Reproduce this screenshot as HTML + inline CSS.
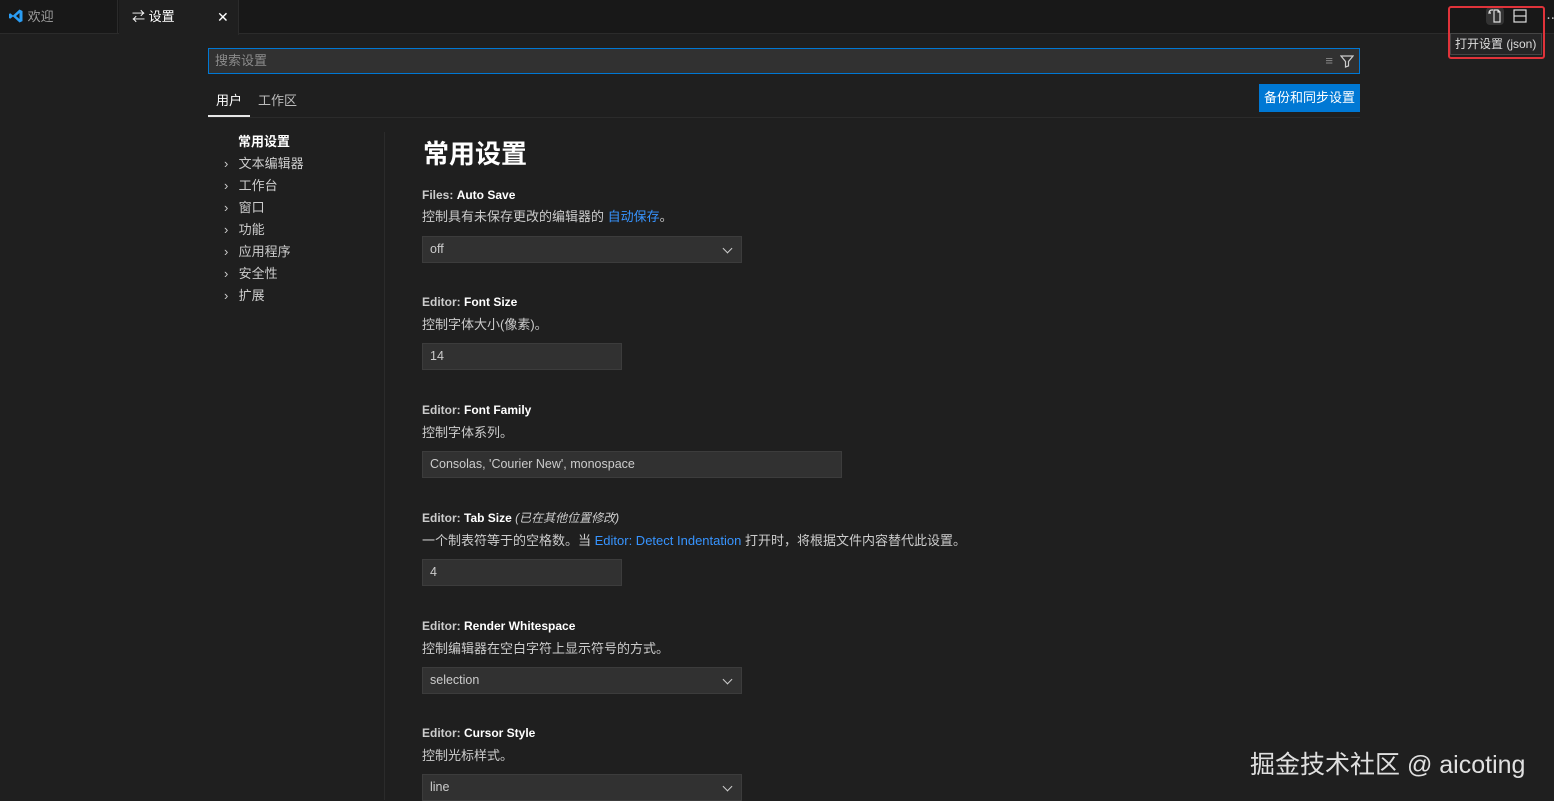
<!DOCTYPE html>
<html><head><meta charset="utf-8"><style>
*{margin:0;padding:0;box-sizing:border-box}
body{width:1554px;height:800px;background:#1f1f1f;font-family:"Liberation Sans","Noto Sans CJK SC",sans-serif;color:#ccc;font-size:13px;position:relative;overflow:hidden}
.abs{position:absolute}
.tabbar{left:0;top:0;width:1554px;height:34px;background:#181818;border-bottom:1px solid #2b2b2b}
.tab{top:0;height:34px;line-height:34px;font-size:13px}
.search{left:208px;top:48px;width:1152px;height:26px;border:1px solid #0078d4;background:#313131;color:#8b8b8b;padding-left:6px;line-height:24px;font-size:13px}
.lbl{font-size:12px;line-height:16px;color:#ccc;font-weight:bold}
.lbl b{color:#fff}
.desc{font-size:13px;line-height:17px;color:#ccc}
.box{background:#313131;border:1px solid #3c3c3c;height:27px;line-height:25px;padding-left:7px;font-size:12.5px;color:#ccc}
.link{color:#3794ff}
.nav div{height:22px;line-height:22px;font-size:13px;color:#ccc}
.chev{display:inline-block;width:13px;padding-left:2px;color:#ccc}
.dd::after{content:"";position:absolute;right:10px;top:8px;width:6px;height:6px;border-right:1.5px solid #ccc;border-bottom:1.5px solid #ccc;transform:rotate(45deg)}
</style></head><body>
<div class="abs tabbar"></div>
<div class="abs tab" style="left:0;width:118px;padding-left:8px;color:#9d9d9d;border-right:1px solid #2b2b2b">
<svg width="16" height="16" viewBox="0 0 16 16" style="vertical-align:-3px"><path d="M11.5 1.5L5 7.5 2.2 5.3 1 6v4l1.2.7L5 8.5l6.5 6 3-1.4V3z M11.5 5v6L8 8z" fill="#2a9df4"/></svg> 欢迎</div>
<div class="abs tab" style="left:119px;width:120px;background:#1f1f1f;height:35px;color:#fff;padding-left:13px;border-right:1px solid #2b2b2b">⇄ 设置<span style="position:absolute;left:98px;font-size:14px">✕</span></div>
<div class="abs" style="left:1486px;top:7px;width:18px;height:18px;border-radius:4px;background:#333"></div>
<svg class="abs" style="left:1487px;top:8px" width="16" height="16" viewBox="0 0 16 16" fill="none" stroke="#ddd" stroke-width="1.2"><path d="M7 2h4l2 2v10H7z M11 2v2h2 M2 5c0-2 1-3 3-3h1M3 3l-1 2 2 0"/></svg>
<svg class="abs" style="left:1513px;top:9px" width="14" height="14" viewBox="0 0 14 14" fill="none" stroke="#ddd" stroke-width="1.2"><rect x="1" y="1" width="12" height="12"/><path d="M1 7h12"/></svg>
<div class="abs" style="left:1542px;top:8px;color:#ccc">⋯</div>
<div class="abs" style="left:1450px;top:33px;width:92px;height:22px;background:#252526;border:1px solid #454545;font-size:12px;line-height:20px;padding-left:4px;color:#ddd">打开设置 (json)</div>
<div class="abs" style="left:1448px;top:6px;width:97px;height:53px;border:2px solid #e0333a;border-radius:3px"></div>
<div class="abs search">搜索设置
<span style="position:absolute;right:26px;top:0;color:#888">≡</span>
<svg style="position:absolute;right:5px;top:5px" width="14" height="14" viewBox="0 0 14 14" fill="none" stroke="#ccc" stroke-width="1.2"><path d="M1 2h12L8.5 7.5V12L5.5 13V7.5z"/></svg></div>
<div class="abs" style="left:216px;top:90px;color:#fff;font-size:13px">用户</div>
<div class="abs" style="left:208px;top:115px;width:42px;height:2px;background:#e7e7e7"></div>
<div class="abs" style="left:258px;top:90px;color:#bbb;font-size:13px">工作区</div>
<div class="abs" style="left:208px;top:117px;width:1152px;height:1px;background:#2b2b2b"></div>
<div class="abs" style="left:1259px;top:84px;width:101px;height:28px;background:#0078d4;color:#fff;font-size:13px;line-height:28px;text-align:center">备份和同步设置</div>
<div class="abs nav" style="left:222px;top:131px">
<div style="padding-left:16px;color:#fff;font-weight:bold">常用设置</div>
<div><span class="chev">›</span> 文本编辑器</div><div><span class="chev">›</span> 工作台</div><div><span class="chev">›</span> 窗口</div><div><span class="chev">›</span> 功能</div><div><span class="chev">›</span> 应用程序</div><div><span class="chev">›</span> 安全性</div><div><span class="chev">›</span> 扩展</div></div>
<div class="abs" style="left:384px;top:132px;width:1px;height:668px;background:#2b2b2b"></div>
<div class="abs" style="left:423px;top:134px;font-size:26px;font-weight:bold;color:#fff">常用设置</div>

<div class="abs lbl" style="left:422px;top:187px">Files: <b>Auto Save</b></div>
<div class="abs desc" style="left:422px;top:208px">控制具有未保存更改的编辑器的 <span class="link">自动保存</span>。</div>
<div class="abs box dd" style="left:422px;top:236px;width:320px">off</div>

<div class="abs lbl" style="left:422px;top:294px">Editor: <b>Font Size</b></div>
<div class="abs desc" style="left:422px;top:316px">控制字体大小(像素)。</div>
<div class="abs box" style="left:422px;top:343px;width:200px">14</div>

<div class="abs lbl" style="left:422px;top:402px">Editor: <b>Font Family</b></div>
<div class="abs desc" style="left:422px;top:424px">控制字体系列。</div>
<div class="abs box" style="left:422px;top:451px;width:420px">Consolas, 'Courier New', monospace</div>

<div class="abs lbl" style="left:422px;top:510px">Editor: <b>Tab Size</b> <i style="font-weight:normal;color:#ccc">(已在其他位置修改)</i></div>
<div class="abs desc" style="left:422px;top:532px">一个制表符等于的空格数。当 <span class="link">Editor: Detect Indentation</span> 打开时，将根据文件内容替代此设置。</div>
<div class="abs box" style="left:422px;top:559px;width:200px">4</div>

<div class="abs lbl" style="left:422px;top:618px">Editor: <b>Render Whitespace</b></div>
<div class="abs desc" style="left:422px;top:640px">控制编辑器在空白字符上显示符号的方式。</div>
<div class="abs box dd" style="left:422px;top:667px;width:320px">selection</div>

<div class="abs lbl" style="left:422px;top:725px">Editor: <b>Cursor Style</b></div>
<div class="abs desc" style="left:422px;top:747px">控制光标样式。</div>
<div class="abs box dd" style="left:422px;top:774px;width:320px">line</div>

<div class="abs" style="left:1250px;top:745px;font-size:25px;color:#e0e0e0">掘金技术社区 @ aicoting</div>
</body></html>
